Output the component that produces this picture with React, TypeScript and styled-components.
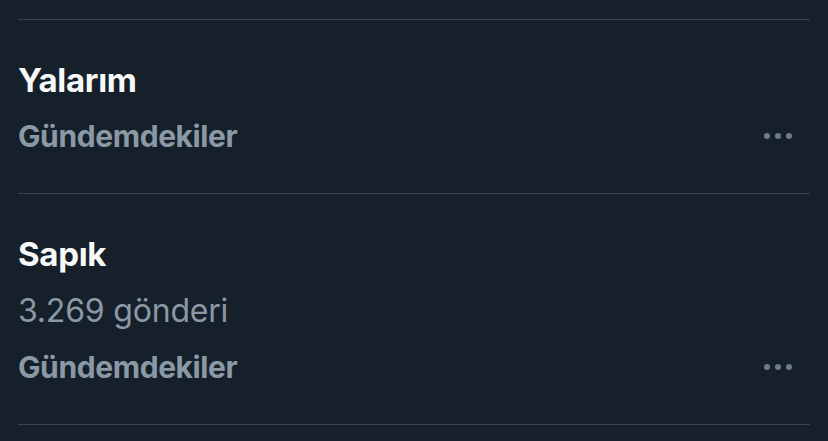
import styled, { createGlobalStyle } from "styled-components";

const GlobalStyle = createGlobalStyle`
  html, body {
    margin: 0;
    padding: 0;
    background: #16202a;
  }
  body {
    font-family: Inter, "Noto Sans", sans-serif;
    -webkit-font-smoothing: antialiased;
  }
`;

const Page = styled.div`
  width: 828px;
  height: 441px;
  overflow: hidden;
  background: #16202a;
  padding: 19px 18px 0 18px;
  box-sizing: border-box;
`;

const TrendItem = styled.div`
  position: relative;
  border-top: 1px solid #38444d;
  padding: 32px 0 28px;
  &:last-child {
    border-bottom: 1px solid #38444d;
  }
`;

const Title = styled.div`
  color: #f7f9f9;
  font-size: 33px;
  font-weight: 700;
  line-height: 56px;
  letter-spacing: -0.3px;
`;

const PostCount = styled.div`
  color: #8b98a5;
  font-size: 32px;
  font-weight: 400;
  line-height: 57px;
  letter-spacing: -0.2px;
`;

const Category = styled.div`
  color: #8b98a5;
  font-size: 30px;
  font-weight: 700;
  line-height: 57px;
  letter-spacing: -0.4px;
`;

const MoreButton = styled.div`
  position: absolute;
  right: 18px;
  bottom: 37px;
  display: flex;
  gap: 5px;
  align-items: center;
  height: 40px;
`;

const Dot = styled.span`
  width: 6px;
  height: 6px;
  border-radius: 50%;
  background: #6e7b88;
`;

interface Trend {
  title: string;
  posts?: string;
  category: string;
}

const trends: Trend[] = [
  { title: "Yalarım", category: "Gündemdekiler" },
  { title: "Sapık", posts: "3.269 gönderi", category: "Gündemdekiler" },
];

const App = () => {
  return (
    <>
      <GlobalStyle />
      <Page>
        {trends.map((t) => (
          <TrendItem key={t.title}>
            <Title>{t.title}</Title>
            {t.posts && <PostCount>{t.posts}</PostCount>}
            <Category>{t.category}</Category>
            <MoreButton>
              <Dot />
              <Dot />
              <Dot />
            </MoreButton>
          </TrendItem>
        ))}
      </Page>
    </>
  );
};

export default App;
